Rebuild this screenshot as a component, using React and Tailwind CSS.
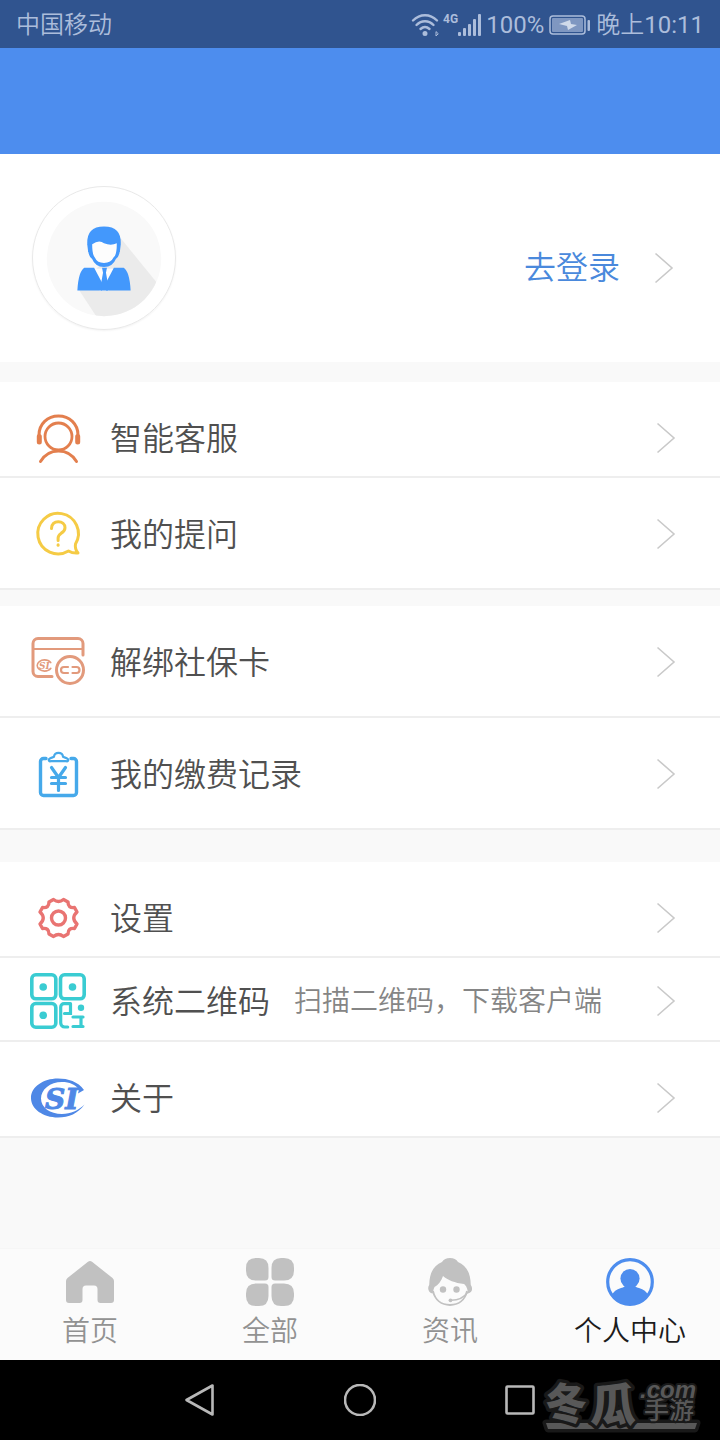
const groups = [
    {
        gap: 'mt-5',
        items: [
            { id: 'service', label: '智能客服', icon: HeadsetIcon, row: 'h-24 pt-[18px]' },
            { id: 'questions', label: '我的提问', icon: QuestionIcon, row: 'h-28 pt-0.5' },
        ],
    },
    {
        gap: 'mt-4',
        items: [
            { id: 'unbind', label: '解绑社保卡', icon: CardIcon, row: 'h-28 pt-0.5' },
            { id: 'payments', label: '我的缴费记录', icon: PaymentIcon, row: 'h-28 pt-0.5' },
        ],
    },
    {
        gap: 'mt-8',
        items: [
            { id: 'settings', label: '设置', icon: GearIcon, row: 'h-24 pt-[18px]' },
            { id: 'qrcode', label: '系统二维码', note: '扫描二维码，下载客户端', icon: QrIcon, row: 'h-21 pt-1' },
            { id: 'about', label: '关于', icon: AboutIcon, row: 'h-24 pt-[18px]' },
        ],
    },
];

const tabs = [
    { id: 'home', label: '首页', icon: HomeIcon },
    { id: 'all', label: '全部', icon: AllIcon },
    { id: 'news', label: '资讯', icon: NewsIcon },
    { id: 'profile', label: '个人中心', icon: ProfileIcon, active: true },
];

function HeadsetIcon() {
    return (
        <svg className="size-14" viewBox="0 0 56 56" fill="none" stroke="#e37f4e" strokeLinecap="round">
            <circle cx="28.500" cy="26.500" r="13.500" strokeWidth="2.800" />
            <path d="M9 25C9 14 17.500 6 28.500 6S48 14 48 25" strokeWidth="3" />
            <path d="M9.300 26.500v5.500M47.700 26.500v5.500" strokeWidth="5" />
            <path d="M10.500 51.500C15 44 21 41 28.500 41S42 44 46.500 51.500" strokeWidth="3" />
        </svg>
    );
}

function QuestionIcon() {
    return (
        <svg className="size-14" viewBox="0 0 56 56" fill="none" stroke="#f5cb45" strokeWidth="3" strokeLinecap="round" strokeLinejoin="round">
            <path d="M45.500 38A20.300 20.300 0 1 0 38.500 45C41 46.500 44.500 47.300 48 47C46 44.500 44.800 41.500 45.500 38Z" />
            <path d="M21.500 22.500c0-4.500 3-6.800 6.800-6.800s6.700 2.400 6.700 6c0 3.300-2 4.500-4 5.700-2 1.300-2.900 2.400-2.900 4.600v2.500" />
            <path d="M28.100 38.800v.4" />
        </svg>
    );
}

function CardIcon() {
    return (
        <svg className="size-14" viewBox="0 0 56 56" fill="none" stroke="#e29a7c" strokeWidth="3" strokeLinecap="round">
            <path d="M22 42.500H8a5 5 0 0 1-5-5V9.500a5 5 0 0 1 5-5h40a5 5 0 0 1 5 5V21" />
            <path d="M3 15h50" strokeWidth="2" />
            <ellipse cx="14.500" cy="31.500" rx="7.300" ry="5.600" strokeWidth="1.600" strokeDasharray="34 6" strokeDashoffset="-3" />
            <text x="9" y="35" fill="#e29a7c" stroke="none" className="font-['DejaVu_Serif',serif] text-[9px] font-bold italic">SI</text>
            <circle cx="40" cy="36" r="13.500" />
            <path d="M38 33h-4a3 3 0 0 0 0 6h4M42.500 33h4a3 3 0 0 1 0 6h-4" strokeWidth="2.200" />
        </svg>
    );
}

function PaymentIcon() {
    return (
        <svg className="size-14" viewBox="0 0 56 56" fill="none" stroke="#46a9ea" strokeWidth="3.400" strokeLinecap="round" strokeLinejoin="round">
            <path d="M16 12.500h-2.500a3 3 0 0 0-3 3v31a3 3 0 0 0 3 3h30a3 3 0 0 0 3-3v-31a3 3 0 0 0-3-3H41" />
            <path d="M20.500 15.200h16a1.300 1.300 0 0 0 .8-2.500c-1.500-1.200-3.300-1.300-4.300-1.900 0-2.300-2-4-4.500-4s-4.500 1.700-4.500 4c-1 .6-2.800.7-4.300 1.900a1.300 1.300 0 0 0 .8 2.500Z" strokeWidth="2.200" />
            <path d="M21.500 21.500l7 10 7-10M28.500 31.500v13M21.500 31.500h14M21.500 37.500h14" strokeWidth="3.200" />
        </svg>
    );
}

function GearIcon() {
    return (
        <svg className="size-14" viewBox="-28.500 -28 56 56" fill="none" stroke="#e97472" strokeWidth="3.400" strokeLinejoin="round">
            <circle r="7" />
            <path d="M5-18.500L9.500-16Q9.500-9.500 16-10.500L18.500-6Q12 0 18.500 6L16 10.500Q9.500 9.500 9.500 16L5 18.500Q0 14.500-5 18.500L-9.500 16Q-9.500 9.500-16 10.500L-18.500 6Q-12 0-18.500-6L-16-10.500Q-9.500-9.500-9.500-16L-5-18.500Q0-14.500 5-18.500Z" />
        </svg>
    );
}

function QrIcon() {
    return (
        <svg className="size-14" viewBox="0 0 56 56" fill="none" stroke="#3accd2" strokeWidth="3.600" strokeLinecap="round">
            <rect x="1.800" y="1.800" width="24" height="24" rx="4" />
            <rect x="30.500" y="1.800" width="23.700" height="24" rx="4" />
            <rect x="1.800" y="30.500" width="24" height="23.700" rx="4" />
            <g fill="#3accd2" stroke="none">
                <circle cx="13.200" cy="14" r="3.800" />
                <circle cx="42.500" cy="14" r="3.800" />
                <circle cx="13.200" cy="42.300" r="3.800" />
                <circle cx="51" cy="34.800" r="3.200" />
            </g>
            <path d="M40.500 30.700H34a3.300 3.300 0 0 0-3.300 3.300v16a4 4 0 0 0 4 4h3M40.500 31v9.500h-6M43 44h10M51 44v9.500M43 53.500h10" strokeWidth="3.200" />
        </svg>
    );
}

function AboutIcon() {
    return (
        <svg className="size-14" viewBox="0 -4 56 56" fill="#4f88e6">
            <path d="M54 16C48 7.500 38 4.500 28 4.500 13 4.500 1 13 1 24S13 43.500 28 43.500c11 0 20-4 26.500-13C48 36.500 41 40 32 40 20 40 11 33.500 11 24.500S20 8 32 8c7.500 0 13.500 2.500 17 7.500l-1 4Z" />
            <text x="15" y="35" stroke="#4f88e6" className="font-['DejaVu_Serif',serif] text-[28px] font-bold italic">SI</text>
        </svg>
    );
}

function HomeIcon() {
    return (
        <svg className="size-12" viewBox="0 0 48 48" fill="#c1c1c1">
            <path d="M22 3.800q2-1.600 4 0L46.500 20q1.500 1.300 1.500 3v19q0 3-3 3H34.500q-3 0-3-3V31q0-3.500-3.500-3.500h-8q-3.500 0-3.500 3.500v11q0 3-3 3H3q-3 0-3-3V23q0-1.700 1.500-3Z" />
        </svg>
    );
}

function AllIcon() {
    return (
        <svg className="size-12" viewBox="0 0 48 48" fill="#c1c1c1">
            <path d="M10 0h3q9.500 0 9.500 10v9q0 3.500-3.500 3.500h-9Q0 22.500 0 12.500V10Q0 0 10 0Z" />
            <path d="M38 0h-3q-9.500 0-9.500 10v9q0 3.500 3.500 3.500h9q10 0 10-10V10Q48 0 38 0Z" />
            <path d="M10 48h3q9.500 0 9.500-10v-9q0-3.500-3.500-3.500h-9q-10 0-10 10V38q0 10 10 10Z" />
            <path d="M38 48h-3q-9.500 0-9.500-10v-9q0-3.500 3.500-3.500h9q10 0 10 10V38q0 10-10 10Z" />
        </svg>
    );
}

function NewsIcon() {
    return (
        <svg className="size-12" viewBox="0 0 48 48" fill="#c1c1c1">
            <path d="M7 33c2 9 8.500 14 17 14s15-5 17-14" fill="none" stroke="#c1c1c1" strokeWidth="1.800" />
            <path d="M16 4C17.500 1.500 20.500 0 24 0s6.500 1.500 8 4c8 3.300 12.500 10 12.800 23 2.200 3 1.700 8-2.800 8.500-.5-5-1.500-7.500-4-9.500-9-1-16.500-4-21-8-1.500 5-5 9-8.500 11-.8 2-1.500 4-1.700 6.500C2.500 35 1 30 3.200 27 3.500 14 8 7.300 16 4Z" />
            <circle cx="17" cy="31.500" r="3.200" />
            <circle cx="30.500" cy="31.500" r="3.200" />
            <circle cx="24.500" cy="42.300" r="1.900" />
            <path d="M24.500 42.300C32 42.500 38 39.500 42 34" fill="none" stroke="#c1c1c1" strokeWidth="1.500" />
        </svg>
    );
}

function ProfileIcon() {
    return (
        <svg className="size-12" viewBox="0 0 48 48" fill="#4d8dee">
            <circle cx="24" cy="24" r="22.300" fill="none" stroke="#4d8dee" strokeWidth="3.200" />
            <circle cx="24" cy="20.500" r="9.600" />
            <path d="M19 26h10q-.5 3.500 4 4 7 2 9 7Q34.500 47 24 47T6 37q2-5 9-7 4.500-.5 4-4Z" />
        </svg>
    );
}

function Avatar() {
    return (
        <svg className="size-36 rounded-full border border-[#e9e9e9] shadow-xs" viewBox="0 0 144 144">
            <clipPath id="disc">
                <circle cx="72" cy="73" r="58" />
            </clipPath>
            <circle cx="72" cy="73" r="58" fill="#f9f9f9" />
            <path d="M89 52L132 105 110 140H70L47 105Z" fill="#ebebeb" clipPath="url(#disc)" />
            <path d="M56 50h32v14q0 6-4 9-3 8-12 8t-12-8q-4-3-4-9Z" fill="#4398fc" />
            <path d="M55 58Q54 40 72 40t17 18l-1 8H56Z" fill="#4398fc" />
            <path d="M60 58q7-5 12-1 7 3 13 0 0 12-3 14-3 6-10 6T63 72q-3-3-3-14Z" fill="#fdfdfd" />
            <path d="M59 83h26l-8 22H67Z" fill="#fdfdfd" />
            <path d="M45 105q1-19 7-23h10l8 15v8ZM99 105q-1-19-7-23H82l-8 15v8Z" fill="#4398fc" />
            <path d="M70 82h5l-1 5 2 11v7h-7v-7l2-11Z" fill="#4398fc" />
        </svg>
    );
}

function Chevron() {
    return (
        <svg className="h-8 w-5 shrink-0" viewBox="0 0 20 32" fill="none" stroke="#c9c9c9" strokeWidth="1.600">
            <path d="M1.500 1.500L18 16 1.500 30.500" />
        </svg>
    );
}

function StatusBar() {
    return (
        <div className="flex h-12 items-center justify-between bg-[#30548f] px-4 pt-0.5 text-2xl text-[#acbddb]">
            <span>中国移动</span>
            <div className="flex items-center">
                <svg className="h-6 w-7" viewBox="0 0 28 24" fill="none" stroke="#acbddb" strokeWidth="2.400" strokeLinecap="round">
                    <path d="M2 7.500C9 .5 19 .5 26 7.500M5.500 12c5-5 12-5 17 0M9.500 16c3-2.800 6-2.800 9 0" />
                    <circle cx="14" cy="20.500" r="1.300" fill="#acbddb" />
                    <path d="M25 19v4l2-2Z" strokeWidth="1" />
                </svg>
                <span className="ml-1 mb-3 font-[Roboto,sans-serif] text-xs font-bold">4G</span>
                <svg className="h-6 w-6" viewBox="0 0 24 24" fill="#acbddb">
                    <rect x="0" y="19" width="3" height="4" rx="1" />
                    <rect x="5" y="15" width="3" height="8" rx="1" />
                    <rect x="10" y="11" width="3" height="12" rx="1" />
                    <rect x="15" y="6" width="3" height="17" rx="1" />
                    <rect x="20" y="1" width="3" height="22" rx="1" />
                </svg>
                <span className="ml-1 font-normal">100%</span>
                <svg className="ml-1 mr-1 h-5 w-11" viewBox="0 0 44 20" fill="none">
                    <rect x="2" y="1" width="35" height="18" rx="3" stroke="#acbddb" strokeWidth="1.500" />
                    <rect x="4" y="3" width="31" height="14" rx="1" fill="#7f97c1" />
                    <path d="M11 9l11-4 1 4 6 1-9 5-1-4Z" fill="#d0daea" />
                    <rect x="39.500" y="5" width="2.500" height="11" rx="1" fill="#acbddb" />
                </svg>
                <span>
                    晚上<span className="font-normal">10:11</span>
                </span>
            </div>
        </div>
    );
}

function MenuRow({ item }) {
    const Icon = item.icon;
    return (
        <a href={`#${item.id}`} className={`flex items-center border-b-2 border-[#eeeeee] bg-white pl-[30px] pr-11 ${item.row}`}>
            <Icon />
            <span className="ml-6 pt-0.5 text-[32px] leading-10 text-[#505050]">{item.label}</span>
            {item.note && <span className="ml-6 pt-0.5 text-[28px] leading-10 text-[#858585]">{item.note}</span>}
            <span className="ml-auto">
                <Chevron />
            </span>
        </a>
    );
}

function Watermark() {
    return (
        <svg className="absolute right-0 bottom-0 h-20 w-46" viewBox="0 0 184 80" fill="#585858" stroke="#191919" strokeWidth="7" strokeLinejoin="round" paintOrder="stroke">
            <path d="M10 63h151l-2 6H12Z" />
            <text x="9" y="59" className="text-[42px] font-black">冬</text>
            <text x="54" y="61" className="text-[46px] font-black">瓜</text>
            <text x="108" y="59" className="text-[25px] font-medium" strokeWidth="4">手游</text>
            <text x="104" y="38" className="font-['Liberation_Sans',sans-serif] text-[24px] font-bold italic" strokeWidth="4">.com</text>
        </svg>
    );
}

function SystemNav() {
    return (
        <div className="relative flex h-20 items-center justify-center gap-32 bg-black">
            <button type="button" aria-label="Back">
                <svg className="size-8" viewBox="0 0 32 32" fill="none" stroke="#b8b8b8" strokeWidth="2.600" strokeLinejoin="round">
                    <path d="M2.500 16L28.500 1.500v29Z" />
                </svg>
            </button>
            <button type="button" aria-label="Home">
                <svg className="size-8" viewBox="0 0 32 32" fill="none" stroke="#b8b8b8" strokeWidth="2.600">
                    <circle cx="16" cy="16" r="15" />
                </svg>
            </button>
            <button type="button" aria-label="Recent apps">
                <svg className="size-8" viewBox="0 0 32 32" fill="none" stroke="#b8b8b8" strokeWidth="2.600" strokeLinejoin="round">
                    <rect x="2.500" y="2.500" width="27" height="27" rx="1" />
                </svg>
            </button>
            <Watermark />
        </div>
    );
}

export default function App() {
    return (
        <div className="flex min-h-screen flex-col bg-[#f9f9f9] font-[Roboto,'Noto_Sans_CJK_SC',sans-serif] font-[350]">
            <StatusBar />
            <header className="h-[106px] bg-[#4d8dee]" />
            <main className="flex-1 pb-24">
                <section className="flex h-52 items-center justify-between bg-white pl-8 pr-[46px]">
                    <Avatar />
                    <a href="#login" className="mt-5 flex items-center gap-[34px] text-[32px] leading-10 text-[#4a89dc]">
                        去登录
                        <Chevron />
                    </a>
                </section>
                {groups.map((group) => (
                    <section key={group.gap} className={group.gap}>
                        {group.items.map((item) => (
                            <MenuRow key={item.id} item={item} />
                        ))}
                    </section>
                ))}
            </main>
            <nav className="grid grid-cols-4 border-t border-[#f6f6f6] bg-[#fbfbfb] pt-[9px] pb-2">
                {tabs.map(({ id, label, icon: Icon, active }) => (
                    <a key={id} href={`#${id}`} className={`flex flex-col items-center gap-1.5 text-[28px] leading-10 ${active ? 'text-[#1c1c1c]' : 'text-[#929292]'}`}>
                        <Icon />
                        {label}
                    </a>
                ))}
            </nav>
            <SystemNav />
        </div>
    );
}
